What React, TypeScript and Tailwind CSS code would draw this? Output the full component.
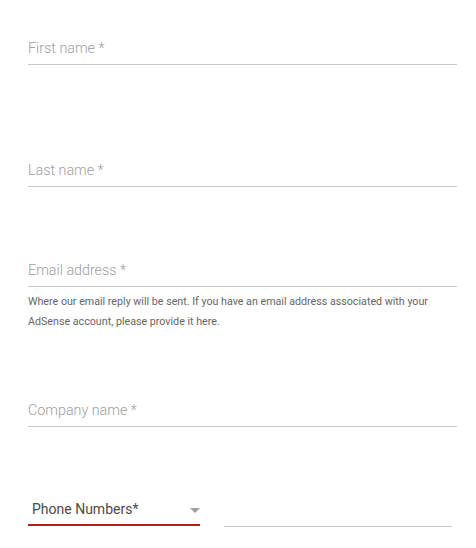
import React from "react";

const font = { fontFamily: "Roboto, 'Liberation Sans', sans-serif" };

const Field: React.FC<{ label: string; className?: string }> = ({ label, className }) => (
  <div className={`border-b border-[#c8c8c8] pb-[4px] ${className ?? ""}`}>
    <div className="h-[24px] text-[14.3px] leading-[24px] font-light text-[#9e9e9e]">{label}</div>
  </div>
);

const App: React.FC = () => {
  return (
    <div className="min-h-[548px] w-[476px] bg-white pl-[28px] pt-[36px]" style={font}>
      <div className="w-[429px]">
        <Field label="First name *" />
        <Field label="Last name *" className="mt-[93px]" />
        <Field label="Email address *" className="mt-[71px]" />
        <p className="mt-[5px] text-[10.7px] leading-[20px] text-[#666]">
          Where our email reply will be sent. If you have an email address associated with your
          AdSense account, please provide it here.
        </p>
        <Field label="Company name *" className="mt-[66px]" />
        <div className="mt-[70px] flex items-end gap-[24px]">
          <div className="relative flex w-[172px] items-center border-b-2 border-[#b71c1c] pb-[3px] pl-[4px]">
            <span className="h-[24px] text-[14px] leading-[24px] text-[#4a4a4a]">Phone Numbers*</span>
            <span className="absolute right-[0px] top-[11px] h-0 w-0 border-x-[5px] border-t-[5px] border-x-transparent border-t-[#9e9e9e]" />
          </div>
          <div className="mb-[-1px] w-[228px] border-b border-[#c8c8c8]" />
        </div>
      </div>
    </div>
  );
};

export default App;
